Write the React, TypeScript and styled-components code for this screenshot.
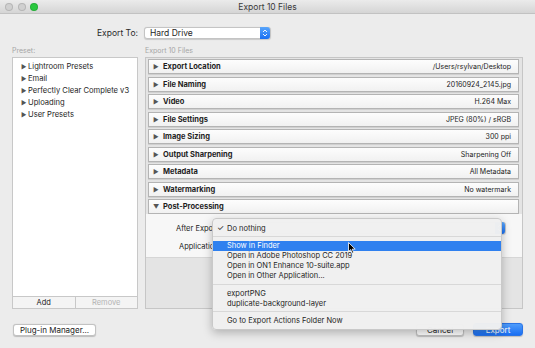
import { createGlobalStyle, styled } from "styled-components";

const GlobalStyle = createGlobalStyle`
  html, body {
    margin: 0;
    padding: 0;
    background: #ececec;
  }
  * {
    box-sizing: border-box;
  }
`;

const Window = styled.div`
  position: relative;
  width: 535px;
  height: 348px;
  overflow: hidden;
  background: #ececec;
  font-family: Inter, "Liberation Sans", sans-serif;
  font-size: 7.5px;
  color: #262626;
  display: flex;
  flex-direction: column;
`;

const TitleBar = styled.div`
  height: 14px;
  flex: none;
  display: flex;
  align-items: center;
  justify-content: center;
  position: relative;
  background: linear-gradient(#ebebeb, #d5d5d5);
  border-bottom: 1px solid #c2c2c2;
  font-size: 8.5px;
  color: #3a3a3a;
`;

const Lights = styled.div`
  position: absolute;
  left: 5px;
  top: 3px;
  display: flex;
  gap: 4.5px;
`;

const Light = styled.span<{ $color: string }>`
  width: 8px;
  height: 8px;
  border-radius: 50%;
  background: ${(p) => p.$color};
  border: 0.5px solid rgba(0, 0, 0, 0.12);
`;

const Body = styled.div`
  flex: 1;
  display: flex;
  flex-direction: column;
  padding: 0 12px 0 12px;
`;

const ExportToRow = styled.div`
  margin-top: 13px;
  height: 12px;
  display: flex;
  align-items: center;
  gap: 6px;
  padding-left: 85px;
  font-size: 8.5px;
`;

const ExportToLabel = styled.span`
  color: #2a2a2a;
`;

const PopUp = styled.div<{ $width: number }>`
  width: ${(p) => p.$width}px;
  height: 12px;
  background: #fff;
  border: 0.5px solid #c4c4c4;
  border-radius: 3px;
  display: flex;
  align-items: center;
  justify-content: space-between;
  padding-left: 5px;
  box-shadow: 0 0.5px 1px rgba(0, 0, 0, 0.15);
`;

const Stepper = styled.span`
  width: 10px;
  height: 12px;
  margin-left: auto;
  border-radius: 0 3px 3px 0;
  background: linear-gradient(#5aa6fb, #176ef3);
  display: flex;
  align-items: center;
  justify-content: center;
`;

const Columns = styled.div`
  margin-top: 7px;
  display: flex;
  gap: 7px;
  height: 263px;
`;

const LeftColumn = styled.div`
  width: 126px;
  display: flex;
  flex-direction: column;
`;

const RightColumn = styled.div`
  width: 378px;
  display: flex;
  flex-direction: column;
`;

const ColumnLabel = styled.div`
  height: 11px;
  line-height: 9px;
  color: #a6a6a6;
  font-size: 7px;
`;

const PresetList = styled.div`
  flex: 1;
  background: #fff;
  border: 1px solid #c8c8c8;
  padding: 2px 0 0 8px;
  display: flex;
  flex-direction: column;
`;

const PresetItem = styled.div`
  height: 12px;
  display: flex;
  align-items: center;
  font-size: 7.6px;
  color: #1e1e1e;
  white-space: nowrap;
`;

const Arrow = styled.span`
  color: #555;
  font-size: 6px;
  width: 7px;
  flex: none;
  display: inline-block;
`;

const ButtonBar = styled.div`
  height: 12px;
  display: flex;
  border: 1px solid #c8c8c8;
  border-top: none;
`;

const BarButton = styled.div<{ $disabled?: boolean }>`
  flex: 1;
  display: flex;
  align-items: center;
  justify-content: center;
  background: #f4f4f4;
  color: ${(p) => (p.$disabled ? "#b3b3b3" : "#222")};
  font-size: 7.5px;
  & + & {
    border-left: 1px solid #c8c8c8;
  }
`;

const SettingsPanel = styled.div`
  flex: 1;
  background: #e4e4e4;
  border: 1px solid #c6c6c6;
  padding-top: 1px;
  display: flex;
  flex-direction: column;
  gap: 2.5px;
`;

const SectionHeader = styled.div`
  height: 15px;
  margin: 0 3px 0 2px;
  flex: none;
  display: flex;
  align-items: center;
  justify-content: space-between;
  padding: 0 7px 0 4px;
  background: linear-gradient(#fdfdfd, #f1f1f1);
  border: 1px solid #b4b4b4;
  box-shadow: 0 1px 0 #d0d0d0;
`;

const SectionTitle = styled.span`
  display: flex;
  align-items: center;
  gap: 3px;
  font-weight: 700;
  font-size: 7.5px;
  color: #1e1e1e;
`;

const SectionValue = styled.span`
  font-size: 7px;
  color: #222;
`;

const PostBody = styled.div`
  height: 44px;
  margin-top: -2.5px;
  background: #f7f7f7;
  border-bottom: 1px solid #d6d6d6;
  display: flex;
  flex-direction: column;
  padding-top: 8px;
  gap: 6px;
`;

const PostRow = styled.div`
  display: flex;
  align-items: center;
  height: 12px;
`;

const PostLabel = styled.span<{ $indent: number }>`
  padding-left: ${(p) => p.$indent}px;
  width: 80px;
  flex: none;
  font-size: 7.5px;
  color: #222;
  white-space: nowrap;
`;

const BottomRow = styled.div`
  margin-top: 14px;
  height: 13px;
  display: flex;
  align-items: center;
  padding-left: 1px;
`;

const PushButton = styled.div<{ $width: number; $primary?: boolean }>`
  width: ${(p) => p.$width}px;
  height: ${(p) => (p.$primary ? 13 : 12)}px;
  display: flex;
  align-items: center;
  justify-content: center;
  border-radius: 3px;
  font-size: 8px;
  background: ${(p) =>
    p.$primary ? "linear-gradient(#4e9cfb, #1a6ff3)" : "#fff"};
  color: ${(p) => (p.$primary ? "#fff" : "#222")};
  border: 0.5px solid ${(p) => (p.$primary ? "#2a74e6" : "#c2c2c2")};
  box-shadow: 0 0.5px 1px rgba(0, 0, 0, 0.2);
`;

const Spacer = styled.div`
  flex: 1;
`;

const Menu = styled.div`
  position: absolute;
  left: 212px;
  top: 218px;
  width: 290px;
  padding: 4px 0 3px;
  background: rgba(240, 240, 240, 0.98);
  border: 0.5px solid #c9c9c9;
  border-radius: 4px;
  box-shadow: 0 3px 10px rgba(0, 0, 0, 0.25);
  font-size: 7.5px;
  color: #1e1e1e;
`;

const MenuItem = styled.div<{ $active?: boolean }>`
  height: 10px;
  display: flex;
  align-items: center;
  padding-left: 14px;
  position: relative;
  background: ${(p) => (p.$active ? "#2f80ef" : "transparent")};
  color: ${(p) => (p.$active ? "#fff" : "#1e1e1e")};
`;

const Check = styled.span`
  position: absolute;
  left: 4px;
  font-size: 8px;
`;

const MenuSeparator = styled.div`
  height: 7.5px;
  display: flex;
  align-items: center;
  &::after {
    content: "";
    flex: 1;
    height: 1px;
    background: #d8d8d8;
  }
`;

const Cursor = styled.svg`
  position: absolute;
  left: 348px;
  top: 242px;
`;

const sections: [string, string][] = [
  ["Export Location", "/Users/rsylvan/Desktop"],
  ["File Naming", "20160924_2145.jpg"],
  ["Video", "H.264 Max"],
  ["File Settings", "JPEG (80%) / sRGB"],
  ["Image Sizing", "300 ppi"],
  ["Output Sharpening", "Sharpening Off"],
  ["Metadata", "All Metadata"],
  ["Watermarking", "No watermark"],
];

const presets = [
  "Lightroom Presets",
  "Email",
  "Perfectly Clear Complete v3",
  "Uploading",
  "User Presets",
];

const StepperIcon = () => (
  <svg width="6" height="8" viewBox="0 0 6 8">
    <path d="M1 3 L3 1 L5 3 M1 5 L3 7 L5 5" stroke="#fff" strokeWidth="0.9" fill="none" />
  </svg>
);

export default function App() {
  return (
    <>
      <GlobalStyle />
      <Window>
        <TitleBar>
          <Lights>
            <Light $color="#d0d0d0" />
            <Light $color="#d0d0d0" />
            <Light $color="#29c83f" />
          </Lights>
          Export 10 Files
        </TitleBar>
        <Body>
          <ExportToRow>
            <ExportToLabel>Export To:</ExportToLabel>
            <PopUp $width={127}>
              Hard Drive
              <Stepper>
                <StepperIcon />
              </Stepper>
            </PopUp>
          </ExportToRow>
          <Columns>
            <LeftColumn>
              <ColumnLabel>Preset:</ColumnLabel>
              <PresetList>
                {presets.map((name) => (
                  <PresetItem key={name}>
                    <Arrow>▶</Arrow>
                    {name}
                  </PresetItem>
                ))}
              </PresetList>
              <ButtonBar>
                <BarButton>Add</BarButton>
                <BarButton $disabled>Remove</BarButton>
              </ButtonBar>
            </LeftColumn>
            <RightColumn>
              <ColumnLabel>Export 10 Files</ColumnLabel>
              <SettingsPanel>
                {sections.map(([title, value]) => (
                  <SectionHeader key={title}>
                    <SectionTitle>
                      <Arrow>▶</Arrow>
                      {title}
                    </SectionTitle>
                    <SectionValue>{value}</SectionValue>
                  </SectionHeader>
                ))}
                <SectionHeader>
                  <SectionTitle>
                    <Arrow>▼</Arrow>
                    Post-Processing
                  </SectionTitle>
                </SectionHeader>
                <PostBody>
                  <PostRow>
                    <PostLabel $indent={30}>After Export:</PostLabel>
                    <PopUp $width={280}>
                      <Stepper>
                        <StepperIcon />
                      </Stepper>
                    </PopUp>
                  </PostRow>
                  <PostRow>
                    <PostLabel $indent={33}>Application:</PostLabel>
                  </PostRow>
                </PostBody>
              </SettingsPanel>
            </RightColumn>
          </Columns>
          <BottomRow>
            <PushButton $width={83}>Plug-in Manager...</PushButton>
            <Spacer />
            <PushButton $width={48}>Cancel</PushButton>
            <PushButton $width={50} $primary style={{ marginLeft: 9 }}>
              Export
            </PushButton>
          </BottomRow>
        </Body>
        <Menu>
          <MenuItem>
            <Check>✓</Check>
            Do nothing
          </MenuItem>
          <MenuSeparator />
          <MenuItem $active>Show in Finder</MenuItem>
          <MenuItem>Open in Adobe Photoshop CC 2019</MenuItem>
          <MenuItem>Open in ON1 Enhance 10-suite.app</MenuItem>
          <MenuItem>Open in Other Application...</MenuItem>
          <MenuSeparator />
          <MenuItem>exportPNG</MenuItem>
          <MenuItem>duplicate-background-layer</MenuItem>
          <MenuSeparator />
          <MenuItem>Go to Export Actions Folder Now</MenuItem>
        </Menu>
        <Cursor width="8" height="12" viewBox="0 0 8 12">
          <path d="M0.5 0.5 L0.5 9.5 L2.7 7.6 L4.2 11.2 L5.6 10.6 L4.2 7.1 L7.2 7.1 Z" fill="#000" stroke="#fff" strokeWidth="0.8" />
        </Cursor>
      </Window>
    </>
  );
}
